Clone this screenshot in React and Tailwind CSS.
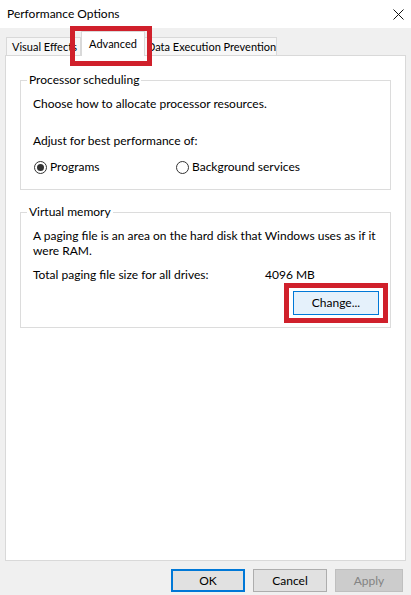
import React from 'react';

function Radio({ checked, label }) {
  return (
    <div className="flex items-center">
      <span className="w-[13px] h-[13px] rounded-full border border-[#333] bg-white flex items-center justify-center">
        {checked && <span className="w-[7px] h-[7px] rounded-full bg-[#333]" />}
      </span>
      <span className="ml-[3px]">{label}</span>
    </div>
  );
}

function GroupBox({ title, className, children }) {
  return (
    <fieldset className={`border border-[#dcdcdc] px-[12px] ${className}`}>
      <legend className="-ml-[6px] px-[2px] leading-[16px]">{title}</legend>
      {children}
    </fieldset>
  );
}

export default function App() {
  return (
    <div
      className="w-[411px] h-[595px] bg-[#f0f0f0] flex flex-col text-[12px] text-black overflow-hidden"
      style={{ fontFamily: '"Segoe UI", Lato, "Noto Sans", sans-serif' }}
    >
      {/* title bar */}
      <div className="h-[28px] bg-white flex items-center justify-between pl-[7px] pr-[6px] shrink-0">
        <span>Performance Options</span>
        <svg width="11" height="11" viewBox="0 0 11 11" className="mr-[1px]">
          <path d="M0.5 0.5 L10.5 10.5 M10.5 0.5 L0.5 10.5" stroke="#111" strokeWidth="1" />
        </svg>
      </div>

      {/* tabs */}
      <div className="relative h-[27px] flex items-end pl-[6px] shrink-0 text-[11px]">
        <div className="h-[18px] w-[75px] border border-b-0 border-[#d9d9d9] bg-[#f7f7f7] pl-[5px] leading-[18px] whitespace-nowrap overflow-hidden">
          Visual Effects
        </div>
        <div className="relative z-10 -mb-[1px] h-[25px] w-[64px] border border-b-0 border-[#d9d9d9] bg-white text-center leading-[24px]">
          Advanced
        </div>
        <div className="h-[18px] w-[132px] border border-b-0 border-l-0 border-[#d9d9d9] bg-[#f7f7f7] pl-[2px] leading-[18px] whitespace-nowrap">
          Data Execution Prevention
        </div>
        <div className="absolute z-20 left-[70px] top-[-2px] w-[82px] h-[40px] border-[5px] border-[#d0202b]" />
      </div>

      {/* panel */}
      <div className="mx-[5px] h-[506px] border border-[#d9d9d9] bg-white px-[14px] pt-[16px] shrink-0">
        <GroupBox title="Processor scheduling" className="pb-[14px]">
          <div className="leading-[16px] mt-[8px]">Choose how to allocate processor resources.</div>
          <div className="leading-[16px] mt-[21px]">Adjust for best performance of:</div>
          <div className="flex leading-[16px] mt-[10px] ml-[1px]">
            <div className="w-[142px]">
              <Radio checked label="Programs" />
            </div>
            <Radio label="Background services" />
          </div>
        </GroupBox>

        <GroupBox title="Virtual memory" className="mt-[14px] pb-[12px]">
          <div className="leading-[15px] mt-[8px]">
            A paging file is an area on the hard disk that Windows uses as if it were RAM.
          </div>
          <div className="flex leading-[16px] mt-[9px]">
            <span className="w-[232px]">Total paging file size for all drives:</span>
            <span>4096 MB</span>
          </div>
          <div className="flex justify-end mt-[8px] mr-[-1px]">
            <div className="relative">
              <button className="w-[86px] h-[24px] border border-[#0078d7] bg-[#e5f1fb] leading-[20px]">
                Change...
              </button>
              <div className="absolute left-[-9px] top-[-8px] w-[104px] h-[40px] border-[5px] border-[#d0202b]" />
            </div>
          </div>
        </GroupBox>
      </div>

      {/* bottom buttons */}
      <div className="flex justify-end gap-[8px] pr-[8px] mt-[8px]">
        <button className="w-[74px] h-[23px] border-2 border-[#0078d7] bg-[#e1e1e1]">OK</button>
        <button className="w-[74px] h-[23px] border border-[#adadad] bg-[#e1e1e1]">Cancel</button>
        <button className="w-[68px] h-[23px] border border-[#bfbfbf] bg-[#cccccc] text-[#838383]">Apply</button>
      </div>
    </div>
  );
}
